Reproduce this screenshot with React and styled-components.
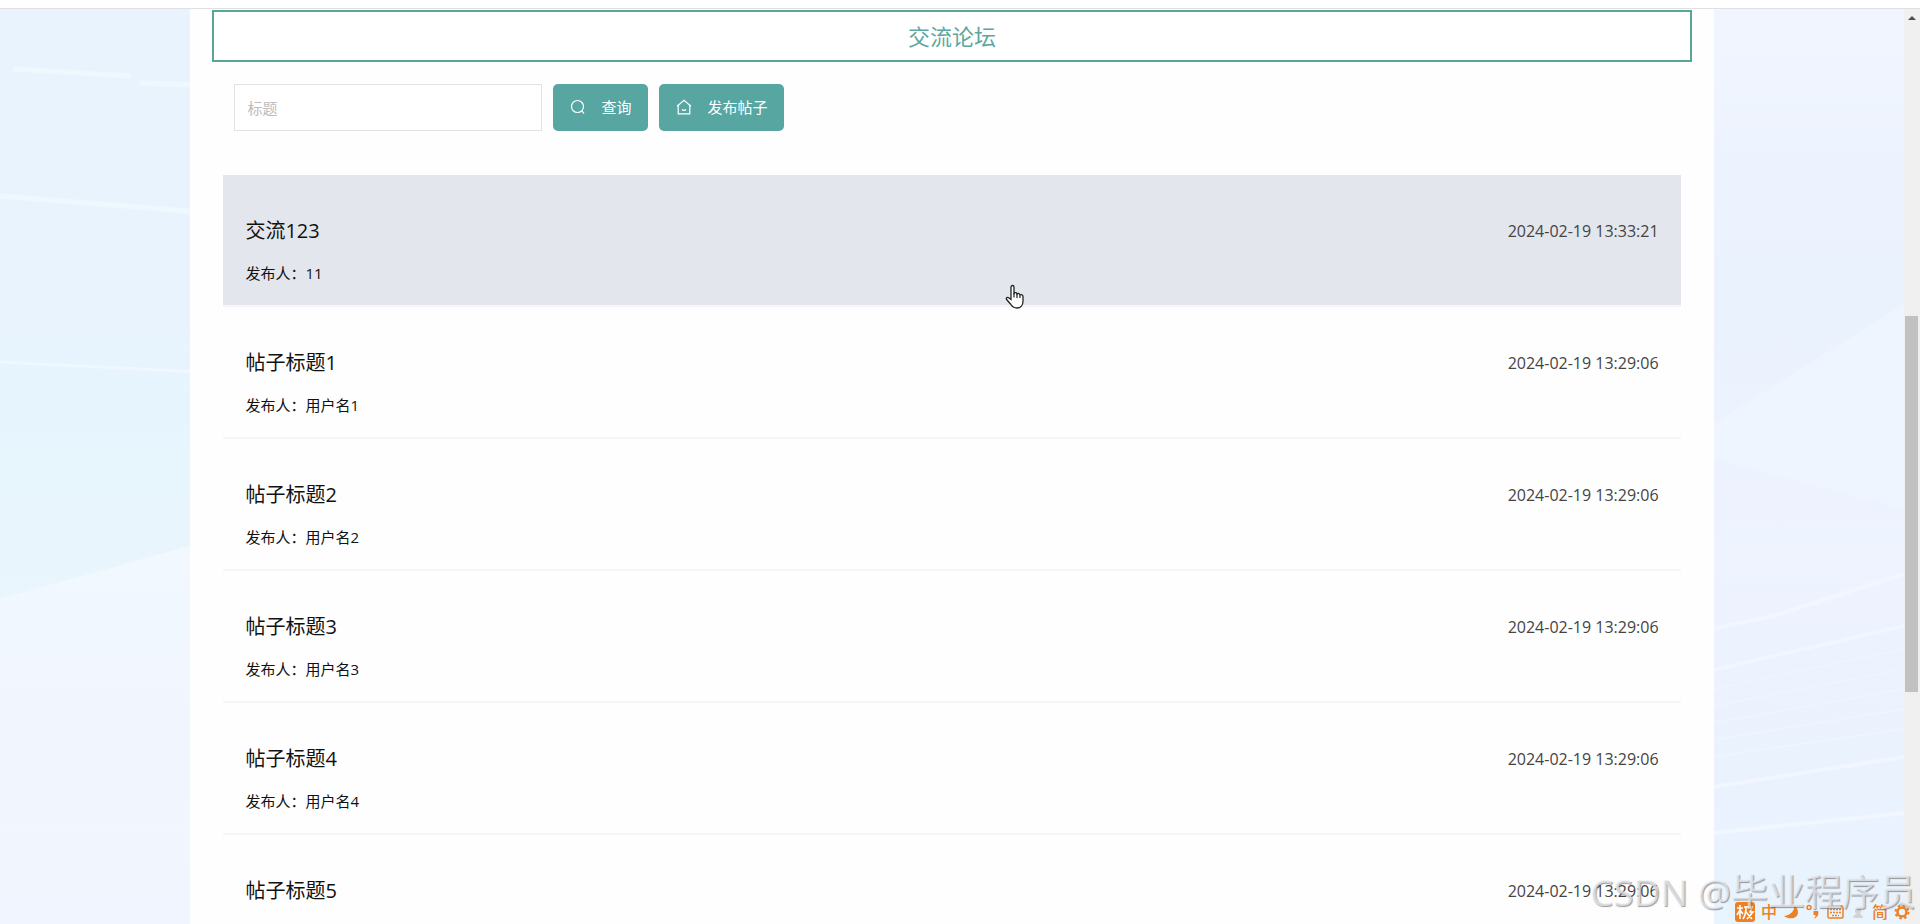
import React from "react";
import styled, { createGlobalStyle } from "styled-components";

const GlobalStyle = createGlobalStyle`
  *, *::before, *::after { box-sizing: border-box; }
  html, body { margin: 0; padding: 0; overflow: hidden; }
  body, button, input {
    font-family: "Open Sans", "Noto Sans CJK SC", sans-serif;
  }
`;

const Shell = styled.div`
  position: relative;
  display: flex;
  flex-direction: column;
  height: 100vh;
  overflow: hidden;
  background: #eef4fe;
`;

const TopEdge = styled.div`
  flex: none;
  height: 9px;
  background: #fff;
  border-bottom: 1px solid #dfe0e4;
`;

const Body = styled.div`
  flex: 1;
  min-height: 0;
  display: flex;
`;

const Viewport = styled.div`
  position: relative;
  flex: 1;
  min-width: 0;
  overflow: hidden;
`;

const Scenery = styled.svg`
  position: absolute;
  inset: 0;
  width: 100%;
  height: 100%;
`;

const Panel = styled.main`
  position: relative;
  width: 80%;
  margin: 0 auto;
  padding: 1px 22px 0;
  background: #fefefe;
`;

const Heading = styled.h1`
  margin: 0;
  border: 2px solid #5aa695;
  font-size: 22px;
  font-weight: 400;
  line-height: 48px;
  text-align: center;
  color: #5ca79f;
  background: #fff;
`;

const Toolbar = styled.form`
  display: flex;
  gap: 11px;
  padding: 22px 22px 0;
`;

const SearchInput = styled.input`
  width: 308px;
  height: 47px;
  padding: 0 12px;
  border: 1px solid #e0e2e5;
  border-radius: 0;
  outline: none;
  background: #fff;
  font-size: 15px;
  color: #333;
  &::placeholder { color: #bbbdc0; opacity: 1; }
`;

const ActionButton = styled.button`
  display: flex;
  align-items: center;
  gap: 15px;
  height: 47px;
  padding: 0 17px 2px;
  border: 0;
  border-radius: 5px;
  background: #57a6a2;
  color: #fff;
  font-size: 15px;
  white-space: nowrap;
  cursor: pointer;
  svg { flex: none; }
`;

const PostList = styled.ul`
  margin: 44px 11px 0;
  padding: 0;
  list-style: none;
`;

const PostRow = styled.li`
  padding: 38px 22px 17px;
  border-bottom: 2px solid #f6f6f6;
  background: ${(p) => (p.$active ? "#e3e6ed" : "transparent")};
  color: #111;
  cursor: pointer;
`;

const PostHead = styled.div`
  display: flex;
  justify-content: space-between;
  align-items: center;
  margin-bottom: 9px;
`;

const PostTitle = styled.h2`
  margin: 0;
  font-size: 20px;
  font-weight: 400;
  line-height: 36px;
`;

const PostTime = styled.time`
  font-size: 16px;
  line-height: 36px;
  color: #444;
`;

const Author = styled.div`
  font-size: 15px;
  line-height: 30px;
`;

const ScrollTrack = styled.div`
  flex: none;
  width: 16px;
  padding: 7px 2px 0 1px;
  background: #f1f0f0;
`;

const ScrollArrow = styled.div`
  width: 0;
  height: 0;
  margin: 0 auto 296px;
  border: 4px solid transparent;
  border-top: 0;
  border-bottom-color: #4c4c4c;
`;

const ScrollThumb = styled.div`
  height: 376px;
  background: #c1c1c1;
`;

const Pointer = styled.svg`
  position: absolute;
  left: 1004px;
  top: 284px;
`;

const Watermark = styled.div`
  position: absolute;
  right: 4px;
  bottom: 8px;
  font-size: 37px;
  line-height: 48px;
  white-space: nowrap;
  color: rgba(240, 242, 246, 0.7);
  text-shadow: 1px 1px 1px rgba(90, 90, 95, 0.6);
`;

const ImeBar = styled.div`
  position: absolute;
  right: 10px;
  bottom: 2px;
  display: flex;
  align-items: center;
  gap: 6px;
  height: 20px;
  color: #ee8023;
  font-size: 16px;
  font-weight: 500;
  line-height: 20px;
`;

const posts = [
  { title: "交流123", author: "11", time: "2024-02-19 13:33:21" },
  { title: "帖子标题1", author: "用户名1", time: "2024-02-19 13:29:06" },
  { title: "帖子标题2", author: "用户名2", time: "2024-02-19 13:29:06" },
  { title: "帖子标题3", author: "用户名3", time: "2024-02-19 13:29:06" },
  { title: "帖子标题4", author: "用户名4", time: "2024-02-19 13:29:06" },
  { title: "帖子标题5", author: "用户名5", time: "2024-02-19 13:29:06" },
];

const SearchIcon = () => (
  <svg width="16" height="16" viewBox="0 0 16 16" fill="none" stroke="currentColor" strokeWidth="1.2" aria-hidden="true">
    <circle cx="7.5" cy="7.5" r="6" />
    <path d="M11.8 11.8 14 14.500" />
  </svg>
);

const HouseIcon = () => (
  <svg width="16" height="16" viewBox="0 0 16 16" fill="none" stroke="currentColor" strokeWidth="1.2" aria-hidden="true">
    <path d="M2.200 14.800V6.200L8 1.300 13.800 6.200v8.600z" />
    <path d="M1 7.200 2.200 6.200M15 7.200 13.800 6.200M6 10.500c1 1.100 3 1.100 4 0" />
  </svg>
);

export default function App() {
  return (
    <>
      <GlobalStyle />
      <Shell>
        <TopEdge />
        <Body>
          <Viewport>
            <Scenery viewBox="0 0 1904 915" preserveAspectRatio="none" aria-hidden="true">
              <defs>
                <linearGradient id="left" x1="0" y1="0" x2="0" y2="1">
                  <stop offset="0" stopColor="#e9f3fe" />
                  <stop offset=".5" stopColor="#e8f3fe" />
                  <stop offset=".62" stopColor="#e6f5fd" />
                  <stop offset="1" stopColor="#ebf5fe" />
                </linearGradient>
                <linearGradient id="right" x1="0" y1="0" x2="0" y2="1">
                  <stop offset="0" stopColor="#f1f5ff" />
                  <stop offset=".3" stopColor="#eaf2fe" />
                  <stop offset=".6" stopColor="#eef3fe" />
                  <stop offset=".85" stopColor="#eaf2fe" />
                  <stop offset="1" stopColor="#e8f4fe" />
                </linearGradient>
                <linearGradient id="lower" x1="0" y1="0" x2="0" y2="1">
                  <stop offset="0" stopColor="#f2f8fe" />
                  <stop offset=".5" stopColor="#f1f6fe" />
                  <stop offset="1" stopColor="#f1f5ff" />
                </linearGradient>
              </defs>
              <rect width="200" height="640" fill="url(#left)" />
              <path d="M0 590 200 534V915H0z" fill="url(#lower)" />
              <g fill="none" stroke="#eef8fe" strokeWidth="5">
                <path d="M14 60 130 67M140 74 200 76M0 187 200 203" />
                <path d="M0 353 200 363" strokeWidth="3" />
              </g>
              <rect x="1700" width="204" height="915" fill="url(#right)" />
              <path d="M1713 415 1904 295V500L1713 450z" fill="#eff5ff" />
              <g fill="none" stroke="#f1f6ff" strokeWidth="4">
                <path d="M1713 620 1780 605 1904 565M1713 661 1904 617M1713 778 1904 748M1713 824 1904 804" />
                <path d="M1713 680 1904 640M1713 697 1904 660M1713 714 1904 680M1713 731 1904 700M1713 748 1904 720" strokeWidth="1" />
              </g>
            </Scenery>
            <Panel>
              <Heading>交流论坛</Heading>
              <Toolbar onSubmit={(e) => e.preventDefault()}>
                <SearchInput type="text" placeholder="标题" aria-label="标题" />
                <ActionButton type="submit"><SearchIcon />查询</ActionButton>
                <ActionButton type="button"><HouseIcon />发布帖子</ActionButton>
              </Toolbar>
              <PostList>
                {posts.map((post, i) => (
                  <PostRow key={post.title} $active={i === 0}>
                    <PostHead>
                      <PostTitle>{post.title}</PostTitle>
                      <PostTime>{post.time}</PostTime>
                    </PostHead>
                    <Author>发布人：{post.author}</Author>
                  </PostRow>
                ))}
              </PostList>
            </Panel>
          </Viewport>
          <ScrollTrack aria-hidden="true">
            <ScrollArrow />
            <ScrollThumb />
          </ScrollTrack>
        </Body>

        <Pointer width="22" height="26" viewBox="0 0 22 26" aria-hidden="true">
          <path
            d="M7 15.5V3.2C7 .9 10 .9 10 3.2v6c1-1 3-.6 3 .8 1-1 3-.5 3 1 1.200-.8 3-.2 3 1.500V17c0 4-2.200 7-6 7-3.500 0-5-1.500-6.500-4L2.600 15.500c-1-1.700 1-2.800 2.400-1.500z"
            fill="#fff"
            stroke="#222"
            strokeWidth="1.3"
          />
          <path d="M10 9v4.500M13 10v4M16 11.500V14" stroke="#222" strokeWidth="1.2" />
        </Pointer>

        <ImeBar>
          <svg width="20" height="20" viewBox="0 0 20 20" aria-hidden="true">
            <rect width="20" height="20" rx="3" fill="#ee8023" />
            <path d="M2 6h6M5 3v14M5 8l-3 5M5 8l3 4M9 5h8l-2 5h3l-6 7M11 5c0 5-1 9-3 12M11 10l6 7" fill="none" stroke="#fff" strokeWidth="1.600" />
          </svg>
          <span>中</span>
          <svg width="16" height="16" viewBox="0 0 16 16" aria-hidden="true">
            <path d="M11 1.500c1 5-3 9.500-10 10.500 5 4 14 3 14-4 0-3-2-5.500-4-6.500z" fill="currentColor" />
          </svg>
          <svg width="16" height="16" viewBox="0 0 16 16" aria-hidden="true">
            <circle cx="4" cy="3.500" r="2" fill="none" stroke="currentColor" strokeWidth="1.500" />
            <path d="M8.500 7h4.500c1.500 3-1 7-4.500 8 1.200-1 2.200-2.500 2-4h-2z" fill="currentColor" />
          </svg>
          <svg width="17" height="16" viewBox="0 0 17 16" fill="none" stroke="currentColor" strokeWidth="1.500" aria-hidden="true">
            <rect x="1" y="2" width="15" height="12" rx="1" />
            <path d="M3 5.500h11M3 8.500h11M5 11.500h7" strokeDasharray="2 1" />
          </svg>
          <svg width="16" height="16" viewBox="0 0 16 16" fill="#d0d3d8" aria-hidden="true">
            <circle cx="8" cy="7" r="3" />
            <path d="M3 14c1-6 9-6 10 0z" />
          </svg>
          <span>简</span>
          <svg width="16" height="16" viewBox="0 0 16 16" fill="none" stroke="currentColor" aria-hidden="true">
            <circle cx="8" cy="8" r="4.500" strokeWidth="2.500" />
            <circle cx="8" cy="8" r="6.500" strokeWidth="2" strokeDasharray="2.500 2.600" />
          </svg>
        </ImeBar>
        <Watermark>CSDN @毕业程序员</Watermark>
      </Shell>
    </>
  );
}
